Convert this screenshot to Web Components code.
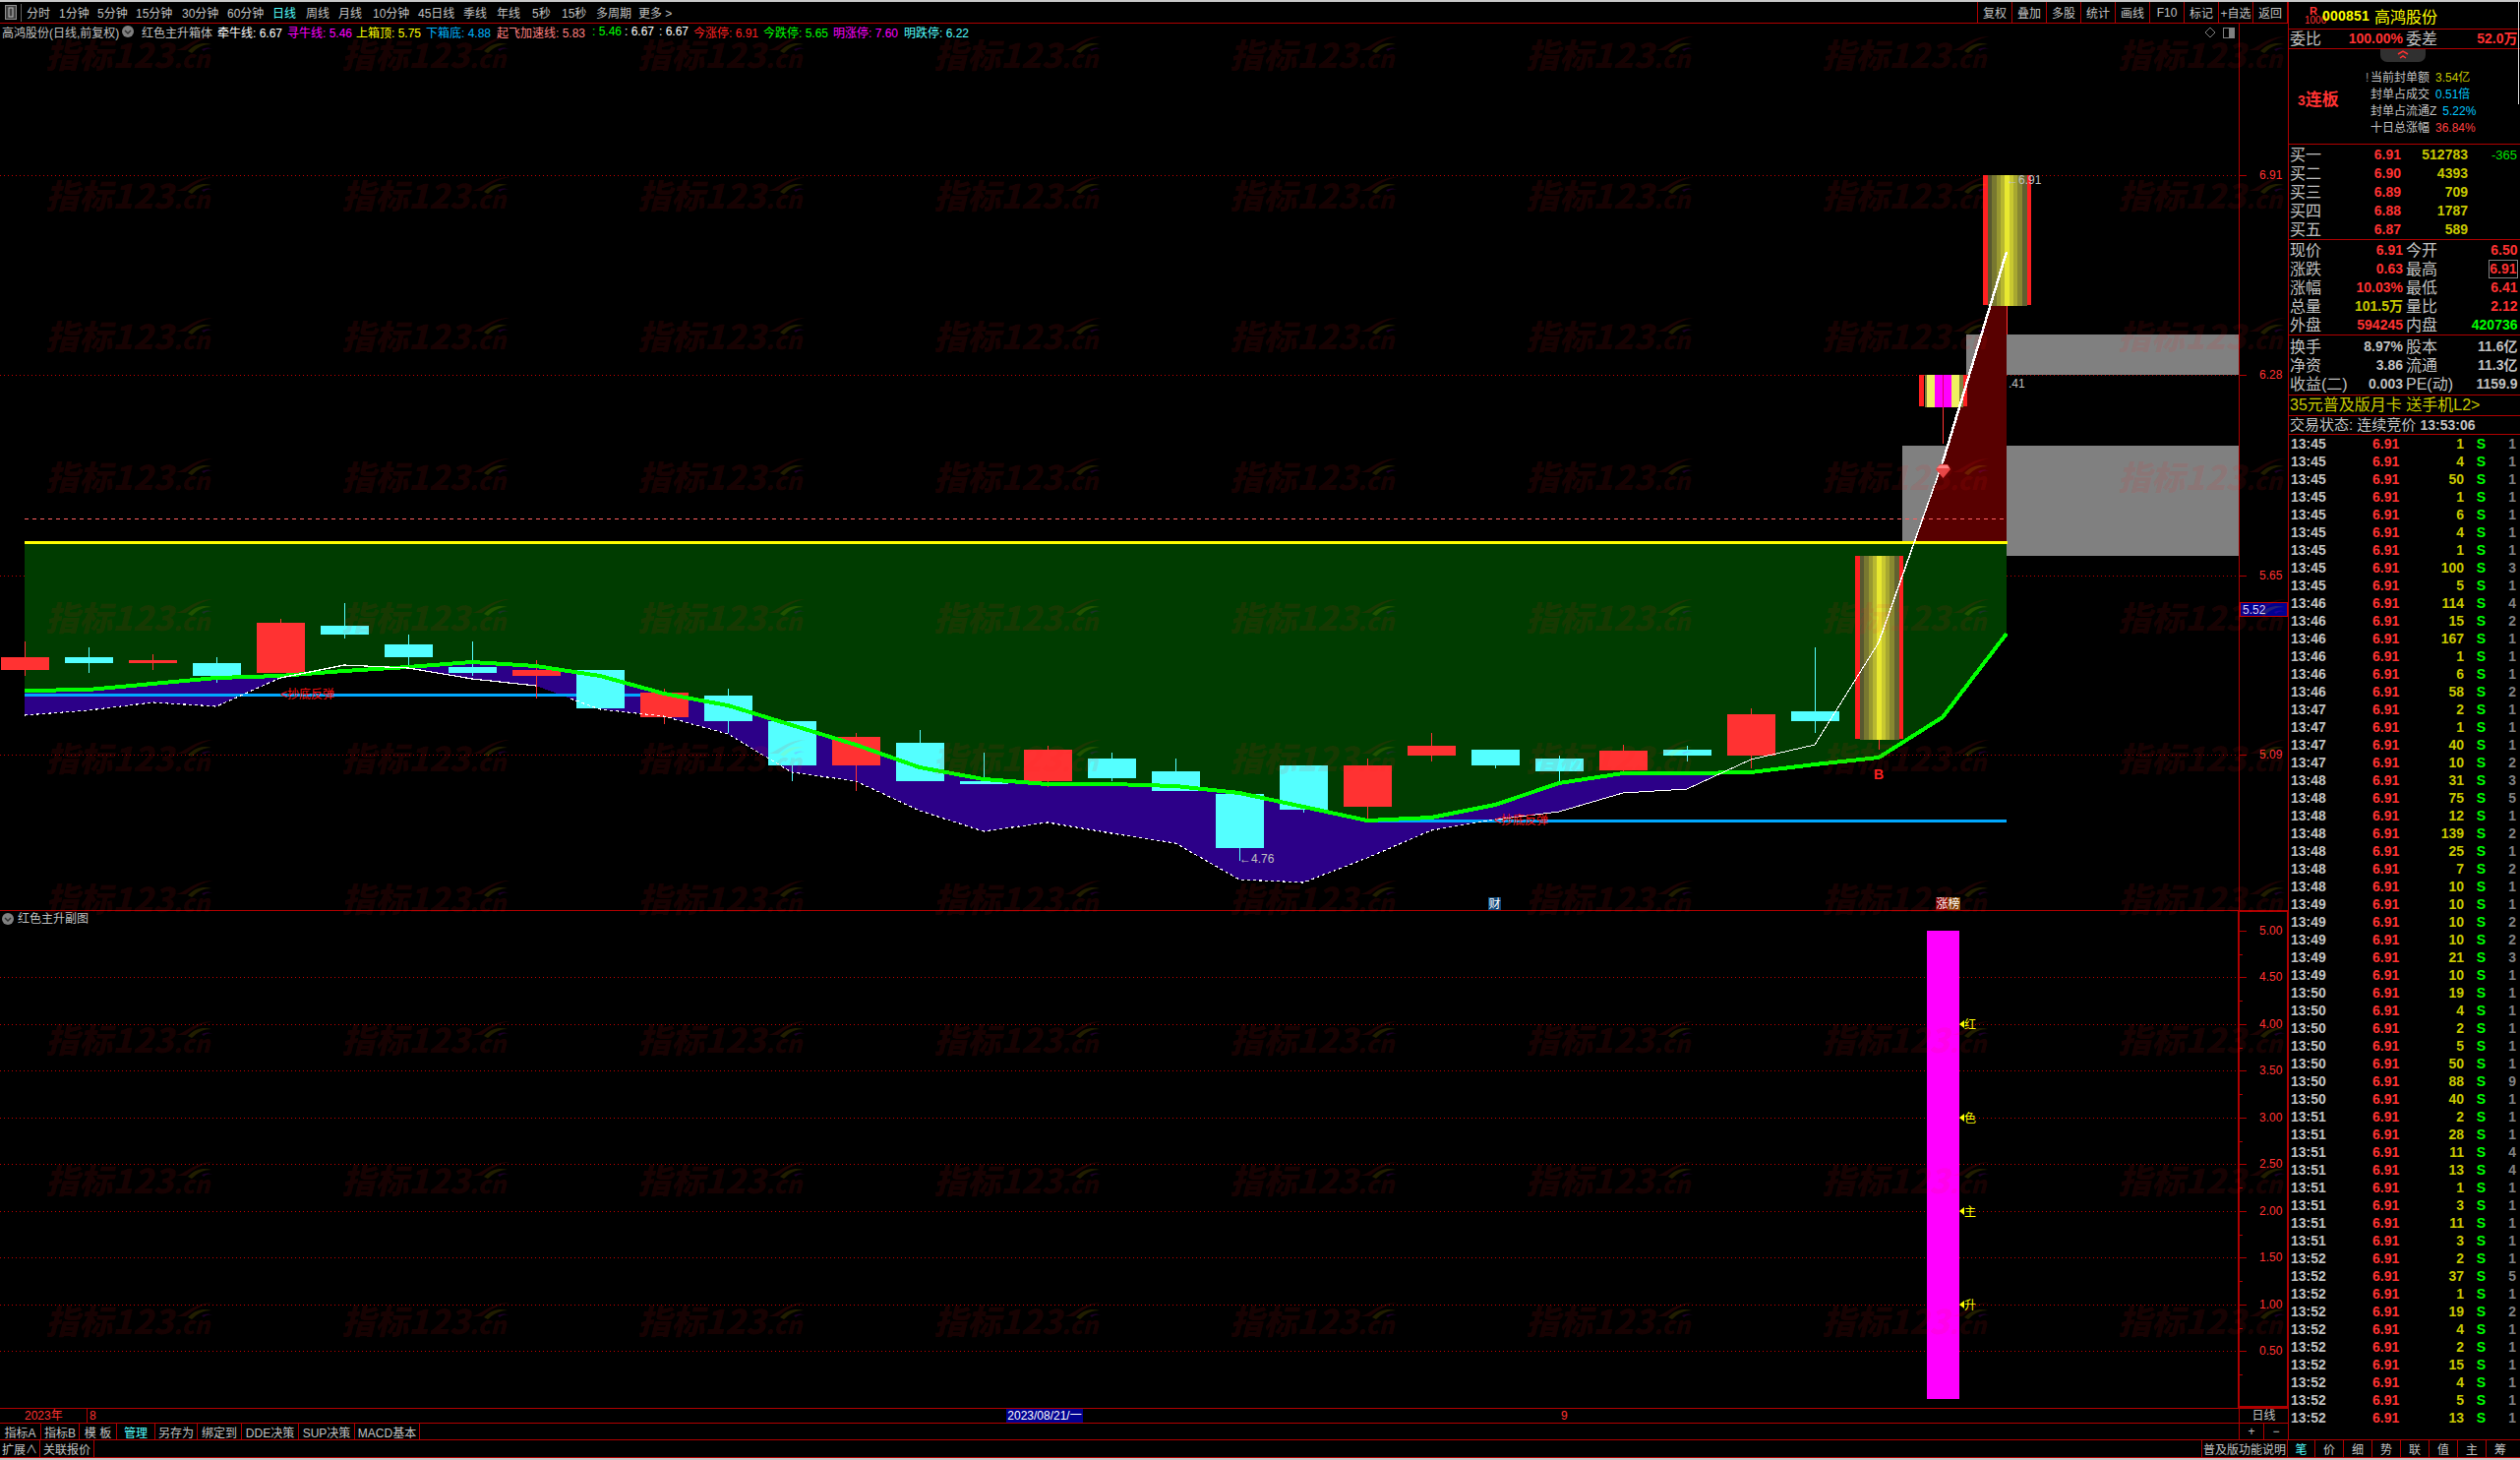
<!DOCTYPE html>
<html lang="zh">
<head>
<meta charset="utf-8">
<title>高鸿股份</title>
<style>
    html, body { margin: 0; padding: 0; background: #000; }
</style>
</head>
<body>
<tdx-app></tdx-app>
<script>
const RED_LINE = '#b00000';
const GRAY = '#c0c0c0';
const OLIVE = '#c8c800';
const PRICE_RED = '#ff3232';

class BarCell extends HTMLElement {
    constructor() {
        super();
        this.attachShadow({ mode: 'open' });
        this.shadowRoot.innerHTML = `
            <style>
                :host {
                    display: flex;
                    flex: none;
                    align-items: center;
                    justify-content: center;
                    box-sizing: border-box;
                    height: 100%;
                    border-right: 1px solid ${RED_LINE};
                    color: ${GRAY};
                    font-size: 12px;
                    white-space: nowrap;
                }
                :host([active]) { color: #54ffff; }
                :host([left]) { border-right: 0; border-left: 1px solid ${RED_LINE}; }
                :host([plain]) { border: 0; }
            </style>
            <slot></slot>
        `;
    }

    connectedCallback() {
        this.style.width = this.getAttribute('w') + 'px';
    }
}

class MenuBar extends HTMLElement {
    constructor() {
        super();
        const periods = [['分时', 33], ['1分钟', 39], ['5分钟', 39], ['15分钟', 47], ['30分钟', 46], ['60分钟', 46],
            ['日线', 34, 1], ['周线', 33], ['月线', 35], ['10分钟', 46], ['45日线', 46], ['季线', 34], ['年线', 36],
            ['5秒', 30], ['15秒', 35], ['多周期', 43], ['更多 >', 40]];
        const buttons = ['复权', '叠加', '多股', '统计', '画线', 'F10', '标记', '+自选', '返回'];
        this.attachShadow({ mode: 'open' });
        this.shadowRoot.innerHTML = `
            <style>
                :host {
                    display: flex;
                    box-sizing: border-box;
                    height: 22px;
                    border-bottom: 1px solid ${RED_LINE};
                    font-size: 12px;
                    color: ${GRAY};
                }
                .logo { display: flex; align-items: center; width: 27px; flex: none; padding-left: 5px; box-sizing: border-box; }
                .periods { display: flex; align-items: center; }
                .periods span { flex: none; white-space: nowrap; }
                .on { color: #54ffff; }
                .tools { display: flex; margin-left: auto; border-left: 1px solid ${RED_LINE}; }
            </style>
            <div class="logo">
                <svg width="18" height="18" viewBox="0 0 18 18">
                    <rect x="0.5" y="1.5" width="11" height="14" fill="#404040" stroke="#909090"/>
                    <rect x="4" y="4" width="4" height="9" fill="none" stroke="#c0c0c0"/>
                    <line x1="16.5" y1="0" x2="16.5" y2="18" stroke="#606060"/>
                </svg>
            </div>
            <div class="periods">
                ${periods.map(p => `<span class="${p[2] ? 'on' : ''}" style="width:${p[1]}px">${p[0]}</span>`).join('')}
            </div>
            <div class="tools">
                ${buttons.map(b => `<bar-cell w="35">${b}</bar-cell>`).join('')}
            </div>
        `;
    }
}

class ChartLegend extends HTMLElement {
    constructor() {
        super();
        const items = [
            ['高鸿股份(日线,前复权)', GRAY, 122], null, ['红色主升箱体', GRAY, 77],
            ['牵牛线: 6.67', '#ffffff', 71], ['寻牛线: 5.46', '#ff00ff', 70], ['上箱顶: 5.75', '#ffff00', 71],
            ['下箱底: 4.88', '#00b4ff', 72], ['起飞加速线: 5.83', '#ff8080', 97], [': 5.46', '#00ff00', 33],
            [': 6.67', '#ffffff', 35], [': 6.67', '#ffffff', 35], ['今涨停: 6.91', '#ff2020', 71],
            ['今跌停: 5.65', '#00ff00', 71], ['明涨停: 7.60', '#ff00ff', 72], ['明跌停: 6.22', '#54ffff', 70]
        ];
        this.attachShadow({ mode: 'open' });
        this.shadowRoot.innerHTML = `
            <style>
                :host {
                    display: flex;
                    align-self: start;
                    align-items: center;
                    height: 16px;
                    padding-left: 2px;
                    font-size: 12px;
                    white-space: nowrap;
                }
                span { flex: none; }
                svg { flex: none; width: 20px; }
            </style>
            ${items.map(i => i ? `<span style="color:${i[1]};width:${i[2]}px">${i[0]}</span>` :
                `<svg height="12" viewBox="0 0 20 12"><circle cx="6" cy="6" r="6" fill="#808080"/><path d="M3 5l3 3 3-3" fill="none" stroke="#303030" stroke-width="1.5"/></svg>`).join('')}
        `;
    }
}

class KlineChart extends HTMLElement {
    constructor() {
        super();
        this.attachShadow({ mode: 'open' });
        this.shadowRoot.innerHTML = `
            <style>
                :host { display: block; width: 2326px; height: 1407px; }
                svg { display: block; }
                text { font-family: "Liberation Sans", "Noto Sans CJK SC", sans-serif; font-size: 12px; }
                .crisp { shape-rendering: crispEdges; }
            </style>
            ${this._svg()}
        `;
    }

    _rect(x, y, w, h, fill) {
        return `<rect x="${x}" y="${y}" width="${w}" height="${h}" fill="${fill}"/>`;
    }

    _candle(i, c) {
        const mid = 25.5 + 65 * i;
        const left = Math.round(mid - 24.5);
        const color = c[0] === 'r' ? PRICE_RED : '#54ffff';
        return this._rect(Math.floor(mid), c[3], 1, c[4] - c[3], color) + this._rect(left, c[1], 49, c[2] - c[1], color);
    }

    _goldCandle(left, top, bottom) {
        const stripes = ['#585830', '#787830', '#989830', '#b8b830', '#e8e830', '#c8c830', '#a8a830', '#888830', '#606030'];
        let out = this._rect(left, top, 5, bottom - top - 1, '#ff2020') + this._rect(left + 44, top, 5, bottom - top - 1, '#ff2020');
        stripes.forEach((s, n) => { out += this._rect(left + 5 + Math.round(n * 4.33), top, 5, bottom - top, s); });
        return out;
    }

    _svg() {
        const candles = [
            ['r', 668, 681, 652, 687], ['c', 668, 674, 658, 684], ['r', 671, 674, 665, 681], ['c', 674, 687, 668, 694],
            ['r', 633, 684, 629, 684], ['c', 636, 645, 613, 649], ['c', 655, 668, 645, 677], ['c', 678, 684, 652, 687],
            ['r', 681, 687, 671, 710], ['c', 681, 720, 681, 720], ['r', 704, 729, 700, 736], ['c', 707, 733, 700, 745],
            ['c', 733, 778, 733, 794], ['r', 749, 778, 745, 804], ['c', 755, 794, 742, 794], ['c', 794, 797, 765, 797],
            ['r', 762, 794, 758, 800], ['c', 771, 791, 765, 794], ['c', 784, 804, 771, 804], ['c', 807, 862, 807, 875],
            ['c', 778, 823, 778, 826], ['r', 778, 820, 771, 834], ['r', 758, 768, 745, 774], ['c', 762, 778, 762, 781],
            ['c', 771, 784, 768, 794], ['r', 763, 783, 757, 788], ['c', 762, 768, 758, 774], ['r', 726, 768, 720, 781],
            ['c', 723, 733, 658, 745]
        ];
        const greenPts = '25,702 90,701 155,695 220,689 285,687 350,682 415,678 480,673 545,677 610,687 675,705 740,717 805,737 870,757 935,780 1000,792 1065,797 1130,797 1195,799 1260,806 1325,820 1390,834 1455,831 1520,818 1585,796 1650,786 1715,786 1780,785 1845,777 1910,770 1975,729 2040,644'.split(' ');
        const whitePts = '25,727 90,722 155,714 220,718 285,689 350,676 415,679 480,690 545,697 610,721 675,728 740,746 805,785 870,794 935,824 1000,845 1065,836 1130,847 1195,857 1260,894 1325,897 1390,872 1455,844 1520,833 1585,825 1650,806 1715,802 1780,772 1845,757 1910,653'.split(' ');
        const purple = greenPts.slice(0, 28).concat(whitePts.slice(0, 28).reverse()).join(' ');
        const greenFill = `25,551 2040,551 ${greenPts.slice().reverse().join(' ')}`;
        const subLevels = [[946, '5.00'], [993, '4.50'], [1041, '4.00'], [1088, '3.50'], [1136, '3.00'], [1183, '2.50'], [1231, '2.00'], [1278, '1.50'], [1326, '1.00'], [1373, '0.50']];
        const mainLevels = [[178, '6.91'], [381, '6.28'], [585, '5.65'], [767, '5.09']];
        const subWords = [[1041, '红'], [1136, '色'], [1231, '主'], [1326, '升']];

        const dotted = (y, x2) => `<line x1="0" y1="${y}.5" x2="${x2}" y2="${y}.5" stroke="#c00000" stroke-dasharray="1 3" class="crisp"/>`;
        const tick = (y, len) => this._rect(2277, y, len, 1, RED_LINE);

        return `
        <svg width="2326" height="1407" viewBox="0 24 2326 1407">
            ${mainLevels.map(l => dotted(l[0], 2276) + tick(l[0], 7)).join('')}
            ${subLevels.slice(1).map(l => dotted(l[0], 2276)).join('')}
            <g class="crisp">
                ${this._rect(1999, 340, 277, 41, '#808080')}
                ${this._rect(1934, 453, 342, 112, '#808080')}
                <polygon points="${purple}" fill="#2c0088"/>
                <polygon points="${greenFill}" fill="#003c00"/>
                <polygon points="1946,551 1975,470 2040,256 2040,551" fill="#580000"/>
                ${this._rect(25, 550, 2016, 3, '#ffff00')}
                <line x1="25" y1="527.5" x2="2040" y2="527.5" stroke="#ff6060" stroke-dasharray="4 4"/>
                ${this._rect(25, 705, 628, 3, '#00a8ff')}
                ${this._rect(1390, 833, 650, 3, '#00a8ff')}
                ${candles.map((c, i) => this._candle(i, c)).join('')}
                ${this._rect(1975, 414, 1, 37, PRICE_RED)}
                ${this._rect(1910, 752, 1, 10, PRICE_RED)}
                ${this._rect(2040, 311, 1, 29, PRICE_RED)}
                ${this._goldCandle(1886, 565, 752)}
                ${this._goldCandle(2016, 178, 311)}
                ${this._rect(1951, 381, 5, 32, '#ff2020')}
                ${this._rect(1957, 381, 39, 33, '#808040')}
                ${this._rect(1959, 381, 33, 33, '#f0f060')}
                ${this._rect(1967, 381, 17, 33, '#ff00ff')}
                ${this._rect(1975, 381, 1, 33, '#e00060')}
                ${this._rect(1996, 381, 4, 32, '#ff2020')}
                <polyline points="${greenPts.join(' ')}" fill="none" stroke="#00ff00" stroke-width="4"/>
                <polyline points="${whitePts.slice(0, 5).join(' ')}" fill="none" stroke="#fff" stroke-width="1.2" stroke-dasharray="3 3"/>
                <polyline points="${whitePts.slice(4, 9).join(' ')}" fill="none" stroke="#fff" stroke-width="1.2"/>
                <polyline points="580,710 ${whitePts.slice(9, 24).join(' ')}" fill="none" stroke="#fff" stroke-width="1.2" stroke-dasharray="3 3"/>
                <polyline points="${whitePts.slice(23).join(' ')}" fill="none" stroke="#fff" stroke-width="1"/>
                <polyline points="1910,653 1975,470" fill="none" stroke="#fff" stroke-width="1.5"/>
                <polyline points="1975,470 2040,256" fill="none" stroke="#fff" stroke-width="2.5"/>
                ${this._rect(1959, 946, 33, 476, '#ff00ff')}
            </g>
            <polygon points="1968,477 1972,472 1980,472 1983,477 1975.5,486" fill="#e84848"/>
            <polygon points="1969,476 1972,473 1980,473 1982,476" fill="#ff9090"/>
            <text x="285" y="710" fill="#ff1010">&lt;抄底反弹</text>
            <text x="1519" y="838" fill="#ff1010">&lt;抄底反弹</text>
            <text x="1260" y="877" fill="${GRAY}">←4.76</text>
            <text x="2040" y="187" fill="${GRAY}">←6.91</text>
            <text x="2042" y="394" fill="${GRAY}">.41</text>
            <text x="1910" y="792" fill="#ff2020" font-weight="bold" text-anchor="middle" style="font-size:14px">B</text>

            <line x1="2276.5" y1="24" x2="2276.5" y2="926" stroke="${RED_LINE}"/>
            <line x1="0" y1="925.5" x2="2326" y2="925.5" stroke="${RED_LINE}"/>
            <rect x="2276" y="926" width="50" height="504" fill="none" stroke="${RED_LINE}" stroke-width="2"/>
            ${mainLevels.map(l => `<text x="2297" y="${l[0] + 4}" fill="${PRICE_RED}">${l[1]}</text>`).join('')}
            ${subLevels.map(l => tick(l[0], 7) + tick(l[0] + 24, 3) + `<text x="2297" y="${l[0] + 4}" fill="${PRICE_RED}">${l[1]}</text>`).join('')}
            ${this._rect(2277, 612, 49, 15, '#000090')}
            <rect x="2277.5" y="612.5" width="48" height="14" fill="none" stroke="#c00000"/>
            <text x="2280" y="624" fill="#d0d0ff">5.52</text>

            <polygon points="2247,28 2252,33 2247,38 2242,33" fill="none" stroke="#808080"/>
            <rect x="2260.5" y="28.5" width="11" height="10" fill="none" stroke="#808080"/>
            ${this._rect(2266, 29, 5, 9, '#808080')}

            ${this._rect(1513, 912, 13, 13, '#104878')}
            <text x="1513.5" y="923" fill="#fff">财</text>
            ${this._rect(1968, 912, 12, 13, '#800000')}
            ${this._rect(1980, 912, 13, 13, '#804000')}
            <text x="1968.5" y="923" fill="#fff">涨榜</text>

            <circle cx="8" cy="934" r="6" fill="#808080"/>
            <path d="M5 933l3 3 3-3" fill="none" stroke="#303030" stroke-width="1.5"/>
            <text x="18" y="938" fill="${GRAY}">红色主升副图</text>
            ${subWords.map(w => `<polygon points="1992,${w[0]} 1997,${w[0] - 4} 1997,${w[0] + 4}" fill="#ffff00"/><text x="1997" y="${w[0] + 5}" fill="#ffff00">${w[1]}</text>`).join('')}
        </svg>`;
    }
}

class ChartArea extends HTMLElement {
    constructor() {
        super();
        this.attachShadow({ mode: 'open' });
        this.shadowRoot.innerHTML = `
            <style>
                :host { display: grid; height: 1407px; }
                ::slotted(*), kline-chart, chart-legend { grid-area: 1 / 1; }
            </style>
            <kline-chart></kline-chart>
            <chart-legend></chart-legend>
        `;
    }
}

class DateBar extends HTMLElement {
    constructor() {
        super();
        this.attachShadow({ mode: 'open' });
        this.shadowRoot.innerHTML = `
            <style>
                :host {
                    display: grid;
                    grid-template-columns: 89px 934px 78px 1175px 50px;
                    box-sizing: border-box;
                    height: 15px;
                    border-top: 1px solid ${RED_LINE};
                    font-size: 12px;
                    line-height: 14px;
                    color: ${PRICE_RED};
                }
                .year { padding-left: 25px; border-right: 1px solid ${RED_LINE}; }
                .month { padding-left: 2px; }
                .cursor { background: #000090; color: #fff; text-align: center; }
                .next { padding-left: 486px; }
                .kind { color: ${GRAY}; text-align: center; border-left: 1px solid ${RED_LINE}; }
            </style>
            <div class="year">2023年</div>
            <div class="month">8</div>
            <div class="cursor">2023/08/21/一</div>
            <div class="next">9</div>
            <div class="kind">日线</div>
        `;
    }
}

class TabBar extends HTMLElement {
    constructor() {
        super();
        const tabs = [['指标A', 42], ['指标B', 39], ['模 板', 38], ['管理', 39, 1], ['另存为', 43], ['绑定到', 45], ['DDE决策', 58], ['SUP决策', 57], ['MACD基本', 66]];
        this.attachShadow({ mode: 'open' });
        this.shadowRoot.innerHTML = `
            <style>
                :host {
                    display: flex;
                    box-sizing: border-box;
                    height: 17px;
                    border-top: 1px solid ${RED_LINE};
                }
                .zoom { display: flex; margin-left: auto; width: 50px; color: ${GRAY}; }
            </style>
            ${tabs.map(t => `<bar-cell w="${t[1]}" ${t[2] ? 'active' : ''}>${t[0]}</bar-cell>`).join('')}
            <div class="zoom">
                <bar-cell w="25" left>+</bar-cell>
                <bar-cell w="25" left>−</bar-cell>
            </div>
        `;
    }
}

class FootBar extends HTMLElement {
    constructor() {
        super();
        const tabs = ['价', '细', '势', '联', '值', '主', '筹'];
        this.attachShadow({ mode: 'open' });
        this.shadowRoot.innerHTML = `
            <style>
                :host {
                    display: flex;
                    box-sizing: border-box;
                    height: 20px;
                    border-top: 1px solid ${RED_LINE};
                    border-bottom: 1px solid ${RED_LINE};
                }
                .gap { flex: 1; }
                .right { display: flex; width: 322px; margin-right: 2px; }
            </style>
            <bar-cell w="41">扩展∧</bar-cell>
            <bar-cell w="55">关联报价</bar-cell>
            <div class="gap"></div>
            <div class="right">
                <bar-cell w="87" left>普及版功能说明</bar-cell>
                <bar-cell w="28" left active>笔</bar-cell>
                ${tabs.map(t => `<bar-cell w="29" left>${t}</bar-cell>`).join('')}
            </div>
        `;
    }
}

class QuoteRow extends HTMLElement {
    constructor() {
        super();
        this.attachShadow({ mode: 'open' });
    }

    connectedCallback() {
        const a = n => this.getAttribute(n) || '';
        this.shadowRoot.innerHTML = `
            <style>
                :host {
                    display: grid;
                    grid-template-columns: 115px 113.5px;
                    column-gap: 3px;
                    padding-left: 1px;
                    height: 19px;
                    line-height: 19px;
                    white-space: nowrap;
                }
                .cell { display: flex; justify-content: space-between; }
                .lb { font-size: 16px; color: ${GRAY}; }
                .val { font-size: 14px; font-weight: bold; }
                .boxed { outline: 1px solid #808080; outline-offset: -1px; padding: 0 1px; line-height: 18px; }
            </style>
            <div class="cell"><span class="lb">${a('l1')}</span><span class="val" style="color:${a('c1')}">${a('v1')}</span></div>
            <div class="cell"><span class="lb">${a('l2')}</span><span class="val ${this.hasAttribute('boxed') ? 'boxed' : ''}" style="color:${a('c2') || a('c1')}">${a('v2')}</span></div>
        `;
    }
}

class BookRow extends HTMLElement {
    constructor() {
        super();
        this.attachShadow({ mode: 'open' });
    }

    connectedCallback() {
        const a = n => this.getAttribute(n) || '';
        this.shadowRoot.innerHTML = `
            <style>
                :host {
                    display: grid;
                    grid-template-columns: 113px 68px 50px;
                    padding-left: 1px;
                    height: 19px;
                    line-height: 19px;
                    white-space: nowrap;
                }
                .cell { display: flex; justify-content: space-between; }
                .lb { font-size: 16px; color: ${GRAY}; }
                .num { font-size: 14px; font-weight: bold; text-align: right; }
                .price { color: ${PRICE_RED}; }
                .vol { color: ${OLIVE}; }
                .diff { font-weight: normal; font-size: 13px; color: #00e000; }
            </style>
            <div class="cell"><span class="lb">${a('label')}</span><span class="num price">${a('price')}</span></div>
            <div class="num vol">${a('vol')}</div>
            <div class="num diff">${a('diff')}</div>
        `;
    }
}

class SealInfo extends HTMLElement {
    constructor() {
        super();
        const rows = [['当前封单额', '3.54亿', OLIVE, 1], ['封单占成交', '0.51倍', '#00c8ff'], ['封单占流通Z', '5.22%', '#00c8ff'], ['十日总涨幅', '36.84%', '#ff4040']];
        this.attachShadow({ mode: 'open' });
        this.shadowRoot.innerHTML = `
            <style>
                :host {
                    display: grid;
                    position: relative;
                    grid-template-columns: 83px 1fr;
                    box-sizing: border-box;
                    height: 97px;
                    padding-top: 21px;
                    border-bottom: 1px solid ${RED_LINE};
                }
                .handle {
                    position: absolute;
                    left: 93px;
                    top: 0;
                    display: flex;
                    justify-content: center;
                    width: 46px;
                    height: 13px;
                    background: #303030;
                    border-radius: 0 0 7px 7px;
                }
                .boards {
                    align-self: start;
                    margin-top: 21px;
                    padding-left: 9px;
                    line-height: 20px;
                    font-size: 17px;
                    font-weight: bold;
                    color: ${PRICE_RED};
                    white-space: nowrap;
                }
                .boards b { font-size: 14px; }
                .line { height: 17px; line-height: 17px; font-size: 12px; color: ${GRAY}; white-space: nowrap; }
                .line span { margin-left: 6px; }
                .line i { display: inline-block; width: 5px; margin-left: -5px; font-style: normal; color: #909090; }
            </style>
            <div class="handle">
                <svg width="14" height="10" viewBox="0 0 14 10"><path d="M2 5l5-3 5 3M4 9l3-2 3 2" fill="none" stroke="#ff3232" stroke-width="1.5"/></svg>
            </div>
            <div class="boards"><b>3</b>连板</div>
            <div>
                ${rows.map(r => `<div class="line">${r[3] ? '<i>!</i>' : ''}${r[0]}<span style="color:${r[2]}">${r[1]}</span></div>`).join('')}
            </div>
        `;
    }
}

class TickList extends HTMLElement {
    constructor() {
        super();
        const groups = {
            '13:45': '1/1 4/1 50/1 1/1 6/1 4/1 1/1 100/3 5/1',
            '13:46': '114/4 15/2 167/1 1/1 6/1 58/2',
            '13:47': '2/1 1/1 40/1 10/2',
            '13:48': '31/3 75/5 12/1 139/2 25/1 7/2 10/1',
            '13:49': '10/1 10/2 10/2 21/3 10/1',
            '13:50': '19/1 4/1 2/1 5/1 50/1 88/9 40/1',
            '13:51': '2/1 28/1 11/4 13/4 1/1 3/1 11/1 3/1',
            '13:52': '2/1 37/5 1/1 19/2 4/1 2/1 15/1 4/1 5/1 13/1'
        };
        let rows = '';
        for (const time of Object.keys(groups)) {
            for (const item of groups[time].split(' ')) {
                const [vol, count] = item.split('/');
                rows += `<div class="time">${time}</div><div class="price">6.91</div><div class="vol">${vol}</div><div class="side">S</div><div class="count">${count}</div>`;
            }
        }
        this.attachShadow({ mode: 'open' });
        this.shadowRoot.innerHTML = `
            <style>
                :host {
                    display: grid;
                    grid-template-columns: 85px 26px 67px 22px 31px;
                    grid-auto-rows: 18px;
                    line-height: 18px;
                    font-size: 14px;
                    font-weight: bold;
                }
                .time { padding-left: 2px; color: ${GRAY}; }
                .price { text-align: right; color: ${PRICE_RED}; }
                .vol { text-align: right; color: ${OLIVE}; }
                .side { text-align: right; color: #00ff00; }
                .count { text-align: right; color: #808080; }
            </style>
            ${rows}
        `;
    }
}

class QuotePanel extends HTMLElement {
    constructor() {
        super();
        const red = PRICE_RED;
        this.attachShadow({ mode: 'open' });
        this.shadowRoot.innerHTML = `
            <style>
                :host {
                    display: block;
                    position: relative;
                    box-sizing: border-box;
                    width: 236px;
                    border-left: 1px solid ${RED_LINE};
                }
                section { box-sizing: border-box; border-bottom: 1px solid ${RED_LINE}; }
                .head {
                    display: flex;
                    align-items: center;
                    height: 28px;
                    padding-left: 16px;
                    color: #ffff00;
                    white-space: nowrap;
                }
                .rank { width: 18px; text-align: center; color: ${red}; font-size: 10px; line-height: 9px; }
                .rank b { font-size: 11px; }
                .code { font-size: 14px; font-weight: bold; letter-spacing: .2px; }
                .name { margin-left: 5px; font-size: 16px; }
                .edge { position: absolute; right: 1px; top: 0; width: 1px; height: 104px; background: #d0d0d0; }
                .thin { height: 20px; }
                .five { height: 97px; padding-top: 0.5px; }
                .three { height: 61px; padding-top: 2px; }
                .promo { height: 21px; padding-left: 1px; line-height: 20px; font-size: 16px; color: ${OLIVE}; white-space: nowrap; }
                .status { height: 19px; padding-left: 1px; line-height: 18px; font-size: 15px; color: ${GRAY}; white-space: nowrap; }
                .status b { font-size: 14px; }
            </style>
            <section class="head">
                <div class="rank"><b>R</b><br>1000</div>
                <div class="code">000851</div>
                <div class="name">高鸿股份</div>
            </section>
            <section class="thin">
                <quote-row l1="委比" v1="100.00%" c1="${red}" l2="委差" v2="52.0万"></quote-row>
            </section>
            <seal-info></seal-info>
            <section class="five">
                <book-row label="买一" price="6.91" vol="512783" diff="-365"></book-row>
                <book-row label="买二" price="6.90" vol="4393"></book-row>
                <book-row label="买三" price="6.89" vol="709"></book-row>
                <book-row label="买四" price="6.88" vol="1787"></book-row>
                <book-row label="买五" price="6.87" vol="589"></book-row>
            </section>
            <section class="five">
                <quote-row l1="现价" v1="6.91" c1="${red}" l2="今开" v2="6.50"></quote-row>
                <quote-row l1="涨跌" v1="0.63" c1="${red}" l2="最高" v2="6.91" boxed></quote-row>
                <quote-row l1="涨幅" v1="10.03%" c1="${red}" l2="最低" v2="6.41"></quote-row>
                <quote-row l1="总量" v1="101.5万" c1="${OLIVE}" l2="量比" v2="2.12" c2="${red}"></quote-row>
                <quote-row l1="外盘" v1="594245" c1="${red}" l2="内盘" v2="420736" c2="#00ff00"></quote-row>
            </section>
            <section class="three">
                <quote-row l1="换手" v1="8.97%" c1="${GRAY}" l2="股本" v2="11.6亿"></quote-row>
                <quote-row l1="净资" v1="3.86" c1="${GRAY}" l2="流通" v2="11.3亿"></quote-row>
                <quote-row l1="收益(二)" v1="0.003" c1="${GRAY}" l2="PE(动)" v2="1159.9"></quote-row>
            </section>
            <section class="promo">35元普及版月卡 送手机L2&gt;</section>
            <section class="status">交易状态: 连续竞价 <b>13:53:06</b></section>
            <tick-list></tick-list>
            <div class="edge"></div>
        `;
    }
}

class WaterMark extends HTMLElement {
    constructor() {
        super();
        const cell = `
            <div class="mark">
                指标123<small>.cn</small>
                <svg width="40" height="20" viewBox="0 0 40 20">
                    <path d="M0 15C10 13 18 1 38 1C26 3 18 9 10 15Z" fill="rgba(255,30,30,.11)"/>
                    <path d="M12 16C20 8 28 7 36 9C28 9 22 12 16 18Z" fill="rgba(255,230,0,.13)"/>
                    <path d="M26 14C30 12 34 12 37 14C33 13 30 14 28 16Z" fill="rgba(190,0,255,.15)"/>
                </svg>
            </div>`;
        this.attachShadow({ mode: 'open' });
        this.shadowRoot.innerHTML = `
            <style>
                :host {
                    position: absolute;
                    inset: 0;
                    display: grid;
                    grid-template-columns: repeat(8, 301px);
                    grid-auto-rows: 143px;
                    box-sizing: border-box;
                    padding: 38px 0 0 46px;
                    overflow: hidden;
                    pointer-events: none;
                }
                .mark {
                    position: relative;
                    height: 30px;
                    line-height: 30px;
                    font-family: "Noto Sans CJK SC", "Liberation Sans", sans-serif;
                    font-size: 34px;
                    font-weight: 900;
                    font-style: italic;
                    color: rgba(255, 30, 30, .11);
                    white-space: nowrap;
                }
                small { font-size: 24px; }
                svg { position: absolute; left: 133px; top: -4px; }
            </style>
            ${cell.repeat(80)}
        `;
    }
}

class TdxApp extends HTMLElement {
    constructor() {
        super();
        this.attachShadow({ mode: 'open' });
        this.shadowRoot.innerHTML = `
            <style>
                :host {
                    display: flex;
                    flex-direction: column;
                    position: relative;
                    box-sizing: border-box;
                    width: 2562px;
                    height: 1484px;
                    border-top: 2px solid #c8c8c8;
                    border-bottom: 2px solid #c8c8c8;
                    background: #000;
                    overflow: hidden;
                    font-family: "Liberation Sans", "Noto Sans CJK SC", sans-serif;
                    font-size: 12px;
                }
                .main { display: flex; height: 1461px; }
                .left { width: 2326px; flex: none; }
            </style>
            <div class="main">
                <div class="left">
                    <menu-bar></menu-bar>
                    <chart-area></chart-area>
                    <date-bar></date-bar>
                    <tab-bar></tab-bar>
                </div>
                <quote-panel></quote-panel>
            </div>
            <foot-bar></foot-bar>
            <water-mark></water-mark>
        `;
    }
}

customElements.define('bar-cell', BarCell);
customElements.define('menu-bar', MenuBar);
customElements.define('chart-legend', ChartLegend);
customElements.define('kline-chart', KlineChart);
customElements.define('chart-area', ChartArea);
customElements.define('date-bar', DateBar);
customElements.define('tab-bar', TabBar);
customElements.define('foot-bar', FootBar);
customElements.define('quote-row', QuoteRow);
customElements.define('book-row', BookRow);
customElements.define('seal-info', SealInfo);
customElements.define('tick-list', TickList);
customElements.define('quote-panel', QuotePanel);
customElements.define('water-mark', WaterMark);
customElements.define('tdx-app', TdxApp);
</script>
</body>
</html>
